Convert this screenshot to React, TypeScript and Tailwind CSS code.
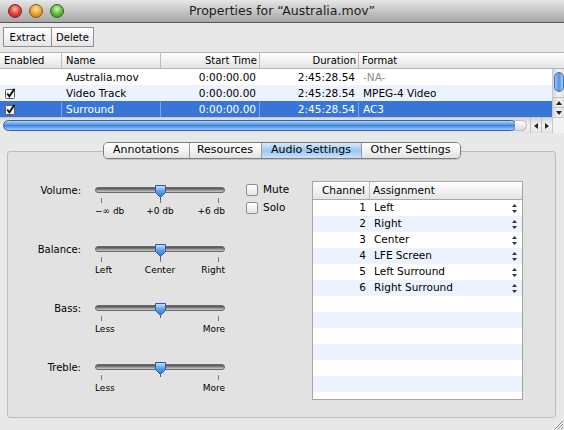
import { ReactNode } from 'react';

const tracks = [
  { enabled: false, name: 'Australia.mov', start: '0:00:00.00', duration: '2:45:28.54', format: '-NA-' },
  { enabled: true, name: 'Video Track', start: '0:00:00.00', duration: '2:45:28.54', format: 'MPEG-4 Video' },
  { enabled: true, name: 'Surround', start: '0:00:00.00', duration: '2:45:28.54', format: 'AC3' },
];

const channels = ['Left', 'Right', 'Center', 'LFE Screen', 'Left Surround', 'Right Surround', '', '', '', '', '', '', ''];

export default function App() {
  return (
    <div className="flex h-[430px] w-[564px] flex-col overflow-hidden bg-[#e8e8e8] font-['Lucida_Grande','DejaVu_Sans',sans-serif] text-black">
      {/* Title bar */}
      <div className="grid h-[23px] shrink-0 grid-cols-[1fr_auto_1fr] items-center border-b border-[#555] bg-gradient-to-b from-[#e6e6e6] to-[#a6a6a6]">
        <div className="flex items-center gap-[7px] pl-[8px]">
          <div className="h-[14px] w-[14px] rounded-full border border-[#7d2620] bg-[radial-gradient(circle_at_50%_35%,#ffc2bc_0%,#e5493e_45%,#a9180f_100%)]" />
          <div className="h-[14px] w-[14px] rounded-full border border-[#8a5a12] bg-[radial-gradient(circle_at_50%_35%,#ffe7a6_0%,#f0a935_45%,#b86e0c_100%)]" />
          <div className="h-[14px] w-[14px] rounded-full border border-[#2f6b1f] bg-[radial-gradient(circle_at_50%_35%,#d8f7b8_0%,#6cc24a_45%,#2c7d1c_100%)]" />
        </div>
        <div className="text-[12.5px] leading-none text-[#1c1c1c]">Properties for “Australia.mov”</div>
        <div />
      </div>

      {/* Toolbar */}
      <div className="flex h-[29px] shrink-0 items-start pl-[3px] pt-[4px]">
        <div className="flex h-[20px] border border-[#8f8f8f] bg-gradient-to-b from-white to-[#e6e6e6] text-[10px]">
          <div className="flex w-[48px] items-center justify-center border-r border-[#8f8f8f]">Extract</div>
          <div className="flex w-[41px] items-center justify-center">Delete</div>
        </div>
      </div>

      {/* Track table */}
      <div className="flex h-[17px] shrink-0 border-y border-[#b4b4b4] bg-gradient-to-b from-white to-[#e4e4e4] text-[10px]">
        <div className="flex w-[62px] items-center border-r border-[#bdbdbd] pl-[4px]">Enabled</div>
        <div className="flex w-[99px] items-center border-r border-[#bdbdbd] pl-[4px]">Name</div>
        <div className="flex w-[99px] items-center justify-end border-r border-[#bdbdbd] pr-[2px]">Start Time</div>
        <div className="flex w-[99px] items-center justify-end border-r border-[#bdbdbd] pr-[2px]">Duration</div>
        <div className="flex flex-1 items-center pl-[3px]">Format</div>
      </div>
      <div className="flex h-[48px] shrink-0">
        <div className="flex flex-1 flex-col text-[10.5px]">
          {tracks.map((t, i) => (
            <TrackRow key={t.name} index={i} {...t} />
          ))}
        </div>
        <VScroll />
      </div>
      <HScroll />

      {/* Tabs + panel */}
      <div className="flex flex-1 flex-col pl-[7px] pt-[9px]">
        <div className="relative z-10 flex w-[549px] justify-center">
          <div className="flex h-[17px] overflow-hidden rounded-[5px] border border-[#7c7c7c] text-[11px] shadow-[0_1px_1px_rgba(0,0,0,0.15)]">
            <Tab w="w-[86px]">Annotations</Tab>
            <Tab w="w-[72px]">Resources</Tab>
            <Tab w="w-[100px]" selected>Audio Settings</Tab>
            <Tab w="w-[98px]" last>Other Settings</Tab>
          </div>
        </div>
        <div className="-mt-[8px] h-[267px] w-[549px] rounded-[3px] border border-[#bcbcbc] bg-[#e2e2e2]">
          <div className="flex pl-[1px] pt-[30px]">
            <div className="flex flex-col gap-[24px]">
              <Slider label="Volume:" marks={['−∞ db', '+0 db', '+6 db']} mid />
              <Slider label="Balance:" marks={['Left', 'Center', 'Right']} mid />
              <Slider label="Bass:" marks={['Less', '', 'More']} />
              <Slider label="Treble:" marks={['Less', '', 'More']} />
            </div>
            <div className="ml-[21px] mt-[2px] flex w-[66px] flex-col gap-[6px] text-[10.5px]">
              <CheckRow label="Mute" />
              <CheckRow label="Solo" />
            </div>
            <div className="-mt-[1px] h-[219px] w-[211px] overflow-hidden border border-[#a5a5a5] bg-white text-[10.5px]">
              <div className="flex h-[18px] border-b border-[#a8a8a8] bg-gradient-to-b from-white to-[#e4e4e4]">
                <div className="flex w-[57px] items-center justify-end border-r border-[#bdbdbd] pr-[4px]">Channel</div>
                <div className="flex flex-1 items-center pl-[3px]">Assignment</div>
              </div>
              {channels.map((c, i) => (
                <div key={i} className={`flex h-[16px] ${i % 2 === 1 ? 'bg-[#edf3fe]' : 'bg-white'}`}>
                  <div className="flex w-[57px] items-center justify-end pr-[4px]">{c ? i + 1 : ''}</div>
                  <div className="flex flex-1 items-center justify-between pl-[4px] pr-[5px]">
                    <span>{c}</span>
                    {c && <Stepper />}
                  </div>
                </div>
              ))}
            </div>
          </div>
        </div>
        <div className="flex h-[12px] justify-end">
          <svg width="12" height="12" viewBox="0 0 12 12">
            <path d="M11 3 L3 11 M11 6 L6 11 M11 9 L9 11" stroke="#8a8a8a" strokeWidth="1" />
            <path d="M11.5 4 L4 11.5 M11.5 7 L7 11.5" stroke="#ffffff" strokeWidth="0.8" />
          </svg>
        </div>
      </div>
    </div>
  );
}

function TrackRow({ index, enabled, name, start, duration, format }: { index: number; enabled: boolean; name: string; start: string; duration: string; format: string }) {
  const selected = index === 2;
  const bg = selected ? 'bg-[#3875d7] text-white' : index % 2 === 1 ? 'bg-[#edf3fe]' : 'bg-white';
  const line = selected ? 'border-r border-[#7ea4e6]' : 'border-r border-transparent';
  return (
    <div className={`flex h-[16px] pt-[1px] ${bg}`}>
      <div className={`flex w-[62px] items-center pl-[5px] ${line}`}>{enabled && <TinyCheck />}</div>
      <div className={`flex w-[99px] items-center pl-[4px] ${line}`}>{name}</div>
      <div className={`flex w-[99px] items-center justify-end pr-[3px] ${line}`}>{start}</div>
      <div className={`flex w-[99px] items-center justify-end pr-[3px] ${line}`}>{duration}</div>
      <div className={`flex flex-1 items-center pl-[4px] ${index === 0 ? 'text-[#8a8a8a]' : ''}`}>{format}</div>
    </div>
  );
}

function TinyCheck() {
  return (
    <svg width="11" height="11" viewBox="0 0 11 11">
      <rect x="0.5" y="1.5" width="9" height="9" rx="1" fill="#fafafa" stroke="#5a5a5a" />
      <path d="M2.2 5.5 L4.4 8.3 L9.5 0.8" stroke="#111" strokeWidth="1.9" fill="none" />
    </svg>
  );
}

function VScroll() {
  return (
    <div className="flex w-[12px] flex-col border-l border-[#c8c8c8] bg-gradient-to-r from-[#d8d8d8] via-[#f4f4f4] to-[#e2e2e2]">
      <div className="mx-auto mt-[3px] h-[20px] w-[10px] rounded-full border border-[#3b6cb4] bg-gradient-to-r from-[#9ec8f5] via-[#4f93e4] to-[#a8d0f8]" />
      <div className="mt-auto flex h-[10px] items-center justify-center border-t border-[#c0c0c0]">
        <svg width="6" height="4" viewBox="0 0 6 4"><path d="M3 0 L6 4 L0 4 Z" fill="#222" /></svg>
      </div>
      <div className="flex h-[10px] items-center justify-center border-t border-[#c0c0c0]">
        <svg width="6" height="4" viewBox="0 0 6 4"><path d="M0 0 L6 0 L3 4 Z" fill="#222" /></svg>
      </div>
    </div>
  );
}

function HScroll() {
  return (
    <div className="flex h-[16px] shrink-0 border-t border-[#c8c8c8]">
      <div className="flex flex-1 items-center bg-gradient-to-b from-[#d8d8d8] via-[#f4f4f4] to-[#e2e2e2] pl-[3px]">
        <div className="h-[11px] w-[514px] rounded-full border border-[#2f62ad] bg-gradient-to-b from-[#b2d4f9] via-[#3f86df] to-[#9fcaf7]" />
        <div className="ml-[-2px] h-[11px] w-[12px] rounded-r-full border border-l-0 border-[#bdbdbd] bg-gradient-to-b from-white to-[#dcdcdc]" />
        <div className="ml-auto flex h-full">
          <div className="flex w-[11px] items-center justify-center border-l border-[#c0c0c0]">
            <svg width="4" height="6" viewBox="0 0 4 6"><path d="M4 0 L4 6 L0 3 Z" fill="#222" /></svg>
          </div>
          <div className="flex w-[11px] items-center justify-center border-l border-[#c0c0c0]">
            <svg width="4" height="6" viewBox="0 0 4 6"><path d="M0 0 L4 3 L0 6 Z" fill="#222" /></svg>
          </div>
        </div>
      </div>
      <div className="w-[12px] border-l border-[#c8c8c8] bg-[#f2f2f2]" />
    </div>
  );
}

function Tab({ children, w, selected, last }: { children: ReactNode; w: string; selected?: boolean; last?: boolean }) {
  const look = selected
    ? 'bg-gradient-to-b from-[#d9eafd] via-[#9cc6f3] to-[#c9e1fb]'
    : 'bg-gradient-to-b from-white via-[#f3f3f3] to-[#e2e2e2]';
  return (
    <div className={`flex h-full ${w} items-center justify-center ${look} ${last ? '' : 'border-r border-[#9a9a9a]'}`}>
      {children}
    </div>
  );
}

function Slider({ label, marks, mid }: { label: string; marks: string[]; mid?: boolean }) {
  return (
    <div className="flex">
      <div className="flex h-[16px] w-[72px] items-center justify-end text-[10px]">{label}</div>
      <div className="ml-[14px] w-[130px]">
        <div className="relative flex h-[16px] items-center">
          <div className="h-[6px] w-full rounded-full border border-[#6a6a6a] bg-gradient-to-b from-[#4c4c4c] via-[#8c8c8c] to-[#d0d0d0]" />
          <svg className="absolute left-[59px] top-[2px]" width="13" height="16" viewBox="0 0 13 16">
            <defs>
              <linearGradient id="thumb" x1="0" y1="0" x2="0" y2="1">
                <stop offset="0" stopColor="#cfe5fd" />
                <stop offset="0.5" stopColor="#5b9cea" />
                <stop offset="1" stopColor="#3677d4" />
              </linearGradient>
            </defs>
            <path d="M1.5 1.5 H11.5 V8.5 L6.5 13.5 L1.5 8.5 Z" fill="url(#thumb)" stroke="#2a5aa3" strokeWidth="1" />
            <path d="M6.5 13.5 V16" stroke="#555" strokeWidth="1" />
          </svg>
        </div>
        <div className="flex h-[5px] justify-between px-[6px]">
          <div className="w-px bg-[#777]" />
          <div className={`w-px ${mid ? 'bg-[#777]' : 'bg-transparent'}`} />
          <div className="w-px bg-[#777]" />
        </div>
        <div className="mt-[3px] grid grid-cols-3 whitespace-nowrap text-[9px] leading-[11px]">
          <span className="text-left">{marks[0]}</span>
          <span className="text-center">{marks[1]}</span>
          <span className="text-right">{marks[2]}</span>
        </div>
      </div>
    </div>
  );
}

function CheckRow({ label }: { label: string }) {
  return (
    <div className="flex h-[12px] items-center gap-[5px]">
      <div className="h-[12px] w-[12px] rounded-[2px] border border-[#8c8c8c] bg-gradient-to-b from-white to-[#e4e4e4]" />
      <span>{label}</span>
    </div>
  );
}

function Stepper() {
  return (
    <svg width="5" height="9" viewBox="0 0 5 9">
      <path d="M2.5 0 L5 3 L0 3 Z M0 6 L5 6 L2.5 9 Z" fill="#333" />
    </svg>
  );
}
